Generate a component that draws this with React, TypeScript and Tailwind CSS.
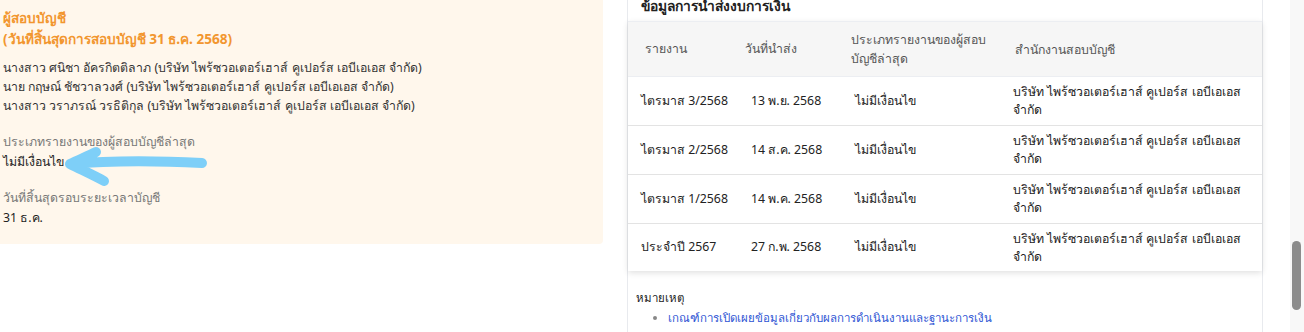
import React from "react";

const rows = [
  { report: "ไตรมาส 3/2568", date: "13 พ.ย. 2568" },
  { report: "ไตรมาส 2/2568", date: "14 ส.ค. 2568" },
  { report: "ไตรมาส 1/2568", date: "14 พ.ค. 2568" },
  { report: "ประจำปี 2567", date: "27 ก.พ. 2568" },
];

const auditors = [
  "นางสาว ศนิชา อัครกิตติลาภ (บริษัท ไพร้ซวอเตอร์เฮาส์ คูเปอร์ส เอบีเอเอส จำกัด)",
  "นาย กฤษณ์ ชัชวาลวงศ์ (บริษัท ไพร้ซวอเตอร์เฮาส์ คูเปอร์ส เอบีเอเอส จำกัด)",
  "นางสาว วราภรณ์ วรธิติกุล (บริษัท ไพร้ซวอเตอร์เฮาส์ คูเปอร์ส เอบีเอเอส จำกัด)",
];

const App = () => {
  return (
    <div className="relative flex w-[1304px] h-[332px] overflow-hidden bg-white font-['Noto_Sans',sans-serif] text-[12.3px]">
      {/* Left */}
      <div className="w-[603px] shrink-0">
        <div className="h-[244px] bg-[#fff7ec] rounded-br-sm pl-[3px] pt-[7px]">
          <div className="text-[13.6px] leading-[21px] font-bold text-[#f2962f]">
            <p>ผู้สอบบัญชี</p>
            <p>(วันที่สิ้นสุดการสอบบัญชี 31 ธ.ค. 2568)</p>
          </div>
          <div className="mt-[9px] leading-[19px] text-[#333]">
            {auditors.map((a) => (
              <p key={a}>{a}</p>
            ))}
          </div>
          <div className="mt-[17px] leading-[20px]">
            <p className="text-[#777]">ประเภทรายงานของผู้สอบบัญชีล่าสุด</p>
            <p className="text-[#222]">ไม่มีเงื่อนไข</p>
          </div>
          <div className="mt-[16px] leading-[20px]">
            <p className="text-[#777]">วันที่สิ้นสุดรอบระยะเวลาบัญชี</p>
            <p className="text-[#222]">31 ธ.ค.</p>
          </div>
        </div>
      </div>

      <div className="w-[24px] shrink-0" />

      {/* Center */}
      <div className="w-[636px] shrink-0 border-l border-r border-[#e8eaee] -mt-[6px]">
        <h2 className="pl-[13px] text-[13.8px] leading-[24px] font-bold text-[#222] h-[27px]">
          ข้อมูลการนำส่งงบการเงิน
        </h2>
        <div className="bg-white shadow-[0_2px_6px_rgba(0,0,0,0.12)]">
          <div className="grid grid-cols-[110px_104px_158px_1fr] h-[56px] items-center bg-[#f6f6f6] border-b border-[#e3e3e3] text-[#555] border-t border-[#eceef2]">
            <div className="pl-[17px]">รายงาน</div>
            <div className="pl-[7px]">วันที่นำส่ง</div>
            <div className="pl-[9px] leading-[19px]">
              ประเภทรายงานของผู้สอบ
              <br />
              บัญชีล่าสุด
            </div>
            <div className="pl-[15px] pt-[3px]">สำนักงานสอบบัญชี</div>
          </div>
          {rows.map((r, i) => (
            <div
              key={r.report}
              className={`grid grid-cols-[110px_104px_158px_1fr] items-center text-[#222] ${
                i < rows.length - 1 ? "h-[49px] border-b border-[#e3e3e3]" : "h-[47px]"
              }`}
            >
              <div className="pl-[13px]">{r.report}</div>
              <div className="pl-[13px]">{r.date}</div>
              <div className="pl-[13px]">ไม่มีเงื่อนไข</div>
              <div className="pl-[13px] leading-[18px]">
                บริษัท ไพร้ซวอเตอร์เฮาส์ คูเปอร์ส เอบีเอเอส
                <br />
                จำกัด
              </div>
            </div>
          ))}
        </div>
        <div className="pl-[8px] pt-[17px] text-[11.5px]">
          <p className="leading-[20px] text-[#222]">หมายเหตุ</p>
          <ul className="pl-[32px] list-disc leading-[20px] marker:text-[#888]">
            <li className="text-[#2f55d4]">เกณฑ์การเปิดเผยข้อมูลเกี่ยวกับผลการดำเนินงานและฐานะการเงิน</li>
            <li className="text-[#2f55d4]">ข้อมูลงบการเงิน</li>
          </ul>
        </div>
      </div>

      <div className="w-[27px] shrink-0" />

      {/* Scrollbar */}
      <div className="w-[14px] shrink-0 bg-[#f8f8f8] pl-[2px] pt-[241px]">
        <div className="w-[9px] h-[69px] rounded-full bg-[#8c8c8c]" />
      </div>

      {/* Annotation arrow */}
      <svg
        className="absolute left-0 top-0 pointer-events-none"
        width="260"
        height="220"
        viewBox="0 0 260 220"
      >
        <path
          d="M202 163 C 165 161, 115 160, 70 164 M96 152 C 88 156, 78 160, 70 164 C 82 170, 95 176, 104 181"
          fill="none"
          stroke="#7ecff8"
          strokeWidth="10"
          strokeLinecap="round"
          strokeLinejoin="round"
        />
      </svg>
    </div>
  );
};

export default App;
